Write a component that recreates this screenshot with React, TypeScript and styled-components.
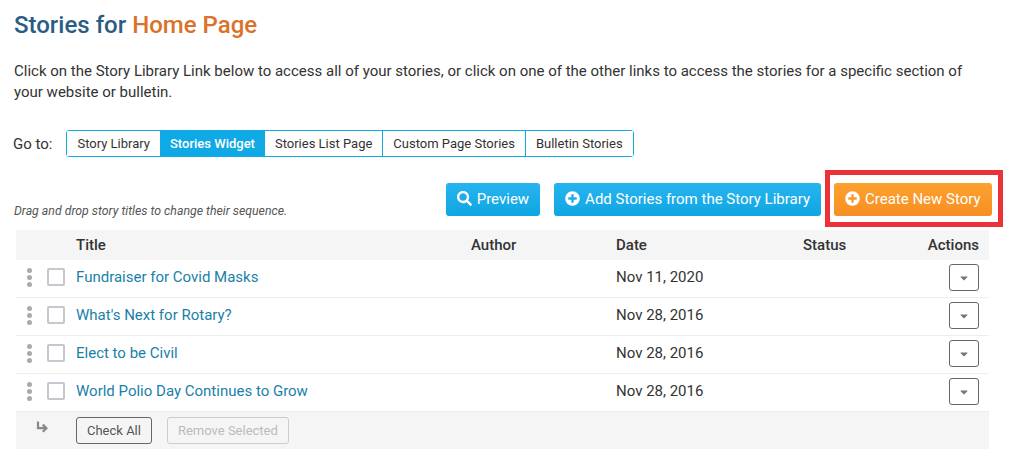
import React from "react";
import styled, { createGlobalStyle } from "styled-components";
import { FaSearch, FaPlusCircle, FaCaretDown } from "react-icons/fa";

const GlobalStyle = createGlobalStyle`
  html, body {
    margin: 0;
    padding: 0;
    background: #fff;
  }
  body {
    font-family: Roboto, "Liberation Sans", Arial, sans-serif;
    color: #333;
    font-size: 15px;
  }
`;

const Page = styled.div`
  width: 1010px;
  height: 462px;
  overflow: hidden;
  box-sizing: border-box;
  padding: 10px 0 0 14px;
`;

const Heading = styled.h1`
  margin: 0;
  font-size: 24px;
  line-height: 30px;
  font-weight: 500;
  color: #2a5d84;
`;

const Accent = styled.span`
  color: #d9722a;
`;

const Intro = styled.p`
  margin: 21px 0 0;
  width: 970px;
  font-size: 15px;
  line-height: 21px;
  color: #333;
`;

const GoTo = styled.div`
  display: flex;
  align-items: center;
  gap: 14px;
  margin: 27px 0 0 -1px;
  height: 27px;
`;

const Tabs = styled.div`
  display: flex;
  height: 27px;
  box-sizing: border-box;
  border: 1px solid #0fa9e6;
  border-radius: 3px;
`;

const Tab = styled.div<{ $active?: boolean }>`
  display: flex;
  align-items: center;
  padding: 0 ${(p) => (p.$active ? "9px" : "10px")};
  font-size: 13px;
  color: ${(p) => (p.$active ? "#fff" : "#333")};
  background: ${(p) => (p.$active ? "#0fa9e6" : "#fff")};
  font-weight: ${(p) => (p.$active ? 500 : 400)};
  border-left: 1px solid #0fa9e6;

  &:first-child {
    border-left: 0;
  }
`;

const Toolbar = styled.div`
  display: flex;
  align-items: flex-end;
  box-sizing: border-box;
  margin-top: 13px;
  padding-bottom: 11px;
  width: 989px;
  height: 57px;
`;

const Hint = styled.em`
  font-size: 12.3px;
  color: #555;
  margin-bottom: -2px;
  margin-right: auto;
`;

const Button = styled.div<{ $orange?: boolean }>`
  display: flex;
  align-items: center;
  gap: 5px;
  height: 33px;
  box-sizing: border-box;
  padding: 0 11px 2px;
  border-radius: 3px;
  color: #fff;
  font-size: 15px;
  font-weight: 400;
  background: ${(p) =>
    p.$orange
      ? "linear-gradient(#fda12e, #f78f24)"
      : "linear-gradient(#27b4ee, #0fa6e3)"};
`;

const Highlight = styled.div`
  align-self: flex-start;
  flex-shrink: 0;
  box-sizing: border-box;
  height: 57px;
  width: 178px;
  padding: 8px 6px 8px 4px;
  margin-left: 4px;
  border: 5px solid #ec3237;
`;

const Gap = styled.div`
  width: 14px;
`;

const Table = styled.div`
  margin: 3px 0 0 2px;
  width: 973px;
`;

const columns = "60px 395px 145px 187px 80px 1fr";

const HeadRow = styled.div`
  display: grid;
  grid-template-columns: ${columns};
  align-items: center;
  height: 30px;
  background: #f5f5f5;
  font-size: 15px;
  font-weight: 500;
  color: #333;
`;

const Row = styled.div`
  display: grid;
  grid-template-columns: ${columns};
  align-items: center;
  height: 38px;
  box-sizing: border-box;
  padding-bottom: 3px;
  border-bottom: 1px solid #eee;
  font-size: 15px;
`;

const Handle = styled.div`
  display: flex;
  align-items: center;
  gap: 15px;
  padding-left: 11px;
`;

const Dots = styled.div`
  display: flex;
  flex-direction: column;
  gap: 2px;
`;

const Dot = styled.span`
  width: 5px;
  height: 5px;
  border-radius: 50%;
  background: #aaa;
`;

const Check = styled.span`
  width: 18px;
  height: 18px;
  box-sizing: border-box;
  border: 2px solid #c5c7cf;
  border-radius: 2px;
  background: #fff;
`;

const TitleLink = styled.a`
  color: #1a7fa8;
`;

const RightCell = styled.div`
  display: flex;
  justify-content: flex-end;
  padding-right: 10px;
`;

const Caret = styled.div`
  display: flex;
  align-items: center;
  justify-content: center;
  width: 30px;
  height: 27px;
  margin-top: 1px;
  box-sizing: border-box;
  border: 1px solid #666;
  border-radius: 3px;
  color: #777;
  font-size: 12px;
`;

const Footer = styled.div`
  display: flex;
  align-items: center;
  height: 37px;
  background: #f5f5f5;
`;

const Arrow = styled.div`
  display: flex;
  width: 60px;
  padding: 0 0 8px 20px;
  box-sizing: border-box;
`;

const SmallButton = styled.div<{ $disabled?: boolean }>`
  display: flex;
  align-items: center;
  height: 27px;
  box-sizing: border-box;
  padding: 0 10px;
  margin-right: 15px;
  border-radius: 3px;
  font-size: 13px;
  border: 1px solid ${(p) => (p.$disabled ? "#ccc" : "#666")};
  color: ${(p) => (p.$disabled ? "#bbb" : "#555")};
`;

const stories = [
  { title: "Fundraiser for Covid Masks", date: "Nov 11, 2020" },
  { title: "What's Next for Rotary?", date: "Nov 28, 2016" },
  { title: "Elect to be Civil", date: "Nov 28, 2016" },
  { title: "World Polio Day Continues to Grow", date: "Nov 28, 2016" },
];

const tabs = [
  "Story Library",
  "Stories Widget",
  "Stories List Page",
  "Custom Page Stories",
  "Bulletin Stories",
];

const App = () => (
  <Page>
    <GlobalStyle />
    <Heading>
      Stories for <Accent>Home Page</Accent>
    </Heading>
    <Intro>
      Click on the Story Library Link below to access all of your stories, or
      click on one of the other links to access the stories for a specific
      section of your website or bulletin.
    </Intro>
    <GoTo>
      Go to:
      <Tabs>
        {tabs.map((tab) => (
          <Tab key={tab} $active={tab === "Stories Widget"}>
            {tab}
          </Tab>
        ))}
      </Tabs>
    </GoTo>
    <Toolbar>
      <Hint>Drag and drop story titles to change their sequence.</Hint>
      <Button>
        <FaSearch size={15} />
        Preview
      </Button>
      <Gap />
      <Button>
        <FaPlusCircle size={15} />
        Add Stories from the Story Library
      </Button>
      <Highlight>
        <Button $orange>
          <FaPlusCircle size={15} />
          Create New Story
        </Button>
      </Highlight>
    </Toolbar>
    <Table>
      <HeadRow>
        <span />
        <span>Title</span>
        <span>Author</span>
        <span>Date</span>
        <span>Status</span>
        <RightCell>Actions</RightCell>
      </HeadRow>
      {stories.map((story) => (
        <Row key={story.title}>
          <Handle>
            <Dots>
              <Dot />
              <Dot />
              <Dot />
            </Dots>
            <Check />
          </Handle>
          <TitleLink>{story.title}</TitleLink>
          <span />
          <span>{story.date}</span>
          <span />
          <RightCell>
            <Caret>
              <FaCaretDown />
            </Caret>
          </RightCell>
        </Row>
      ))}
      <Footer>
        <Arrow>
          <svg width="12" height="12" viewBox="0 0 12 12" fill="none" stroke="#888" strokeWidth="2.2">
            <path d="M2 0.5V7.2H10" />
            <path d="M6.8 3.6L10.4 7.2L6.8 10.8" />
          </svg>
        </Arrow>
        <SmallButton>Check All</SmallButton>
        <SmallButton $disabled>Remove Selected</SmallButton>
      </Footer>
    </Table>
  </Page>
);

export default App;
